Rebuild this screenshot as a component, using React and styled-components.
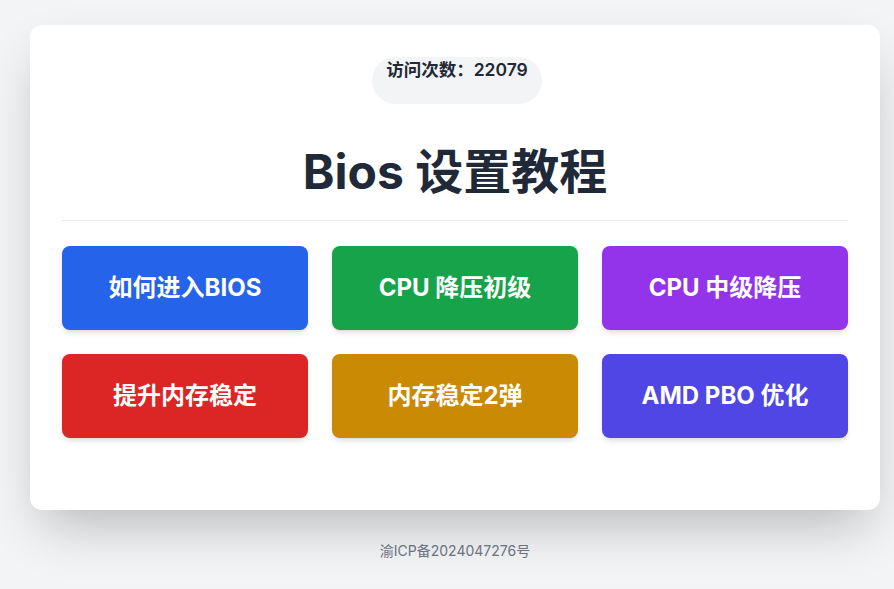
import React from "react";
import styled, { createGlobalStyle } from "styled-components";

const GlobalStyle = createGlobalStyle`
  html, body {
    margin: 0;
    padding: 0;
    background: #f3f4f6;
    font-family: Inter, "Noto Sans CJK SC", sans-serif;
  }
`;

const Page = styled.div`
  min-height: 589px;
  padding: 25px 14px 0 30px;
  box-sizing: border-box;
  background: #f3f4f6;
`;

const Card = styled.main`
  background: #ffffff;
  border-radius: 12px;
  padding: 32px 32px 72px;
  box-shadow: 0 25px 50px -12px rgba(0, 0, 0, 0.25);
  display: flex;
  flex-direction: column;
  align-items: center;
`;

const Counter = styled.div`
  background: #f3f4f6;
  color: #1f2937;
  border-radius: 24px;
  padding: 0 14px 22px;
  margin-left: 4px;
  font-size: 17.5px;
  line-height: 25px;
  font-weight: 600;
`;

const Title = styled.h1`
  margin: 44px 0 24px;
  font-size: 48px;
  line-height: 48px;
  font-weight: 700;
  color: #1f2937;
`;

const Divider = styled.hr`
  width: 100%;
  margin: 0 0 25px;
  border: 0;
  border-top: 1px solid #e5e7eb;
`;

const Grid = styled.div`
  width: 100%;
  display: grid;
  grid-template-columns: repeat(3, 1fr);
  gap: 24px;
`;

const Tile = styled.a`
  height: 84px;
  padding-bottom: 5px;
  box-sizing: border-box;
  border-radius: 8px;
  background: ${(p) => p.$bg};
  color: #ffffff;
  display: flex;
  align-items: center;
  justify-content: center;
  font-size: 24px;
  font-weight: 700;
  text-decoration: none;
  box-shadow: 0 4px 6px -1px rgba(0, 0, 0, 0.1), 0 2px 4px -2px rgba(0, 0, 0, 0.1);
`;

const Footer = styled.footer`
  margin-top: 31px;
  text-align: center;
  font-size: 14px;
  line-height: 20px;
  color: #6b7280;
`;

const links = [
  { label: "如何进入BIOS", bg: "#2563eb" },
  { label: "CPU 降压初级", bg: "#16a34a" },
  { label: "CPU 中级降压", bg: "#9333ea" },
  { label: "提升内存稳定", bg: "#dc2626" },
  { label: "内存稳定2弹", bg: "#ca8a04" },
  { label: "AMD PBO 优化", bg: "#4f46e5" },
];

export default function App() {
  return (
    <>
      <GlobalStyle />
      <Page>
        <Card>
          <Counter>访问次数：22079</Counter>
          <Title>Bios 设置教程</Title>
          <Divider />
          <Grid>
            {links.map((l) => (
              <Tile key={l.label} $bg={l.bg} href="#">
                {l.label}
              </Tile>
            ))}
          </Grid>
        </Card>
        <Footer>渝ICP备2024047276号</Footer>
      </Page>
    </>
  );
}
